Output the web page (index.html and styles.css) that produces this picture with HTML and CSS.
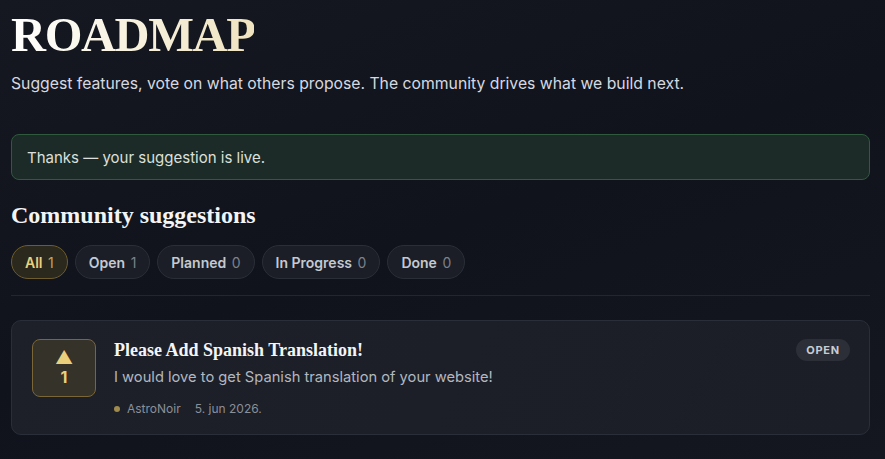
FILE: index.html
```html
<!DOCTYPE html>
<html lang="en">
<head>
    <meta charset="UTF-8">
    <meta name="viewport" content="width=device-width, initial-scale=1.0">
    <title>Roadmap</title>
    <link rel="stylesheet" href="styles.css">
</head>
<body>
    <div class="page">
        <h1 class="title">ROADMAP</h1>
        <p class="lead">Suggest features, vote on what others propose. The community drives what we build next.</p>

        <div class="alert">Thanks — your suggestion is live.</div>

        <h2 class="section-title">Community suggestions</h2>

        <div class="filters">
            <button class="pill active">All <span class="count">1</span></button>
            <button class="pill">Open <span class="count">1</span></button>
            <button class="pill">Planned <span class="count">0</span></button>
            <button class="pill">In Progress <span class="count">0</span></button>
            <button class="pill">Done <span class="count">0</span></button>
        </div>

        <div class="divider"></div>

        <div class="card">
            <div class="vote">
                <span class="arrow">▲</span>
                <span class="votes">1</span>
            </div>
            <div class="card-body">
                <h3 class="card-title">Please Add Spanish Translation!</h3>
                <p class="card-text">I would love to get Spanish translation of your website!</p>
                <div class="meta">
                    <span class="dot"></span>
                    <span>AstroNoir</span>
                    <span class="date">5. jun 2026.</span>
                </div>
            </div>
            <span class="badge">OPEN</span>
        </div>
    </div>
</body>
</html>
```
FILE: styles.css
```css
html, body {
    height: 100%;
}

body {
    margin: 0;
    background: linear-gradient(160deg, #151820 0%, #10131b 50%, #141720 100%);
    color: #d4d7de;
    font-family: Inter, "Noto Sans", sans-serif;
}

.page {
    padding: 6px 15px 0 11px;
}

.title {
    margin: 0;
    font-family: "Liberation Serif", serif;
    font-size: 48.5px;
    font-weight: bold;
    letter-spacing: -1.4px;
    line-height: 58px;
    background: linear-gradient(90deg, #ffffff 0%, #f7f1df 50%, #efe3c0 100%);
    -webkit-background-clip: text;
    background-clip: text;
    color: transparent;
    display: inline-block;
}

.lead {
    margin: 10px 0 0;
    font-size: 15.75px;
    line-height: 20px;
    color: #d6d9e0;
}

.alert {
    margin-top: 40px;
    height: 44px;
    display: flex;
    align-items: center;
    padding: 0 15px;
    border: 1px solid #2f5a3d;
    border-radius: 8px;
    background: #1c2a28;
    color: #dbe0dc;
    font-size: 15px;
}

.section-title {
    margin: 21px 0 0;
    font-family: "Liberation Serif", serif;
    font-size: 24px;
    font-weight: bold;
    line-height: 28px;
    color: #f3f4f6;
}

.filters {
    display: flex;
    gap: 7px;
    margin-top: 16px;
}

.pill {
    margin: 0;
    height: 34px;
    padding: 0 13px;
    border-radius: 17px;
    border: 1px solid #2a2e37;
    background: #1b1e26;
    color: #c5c9d1;
    font-family: Inter, "Noto Sans", sans-serif;
    font-size: 14px;
    font-weight: 600;
}

.pill .count {
    margin-left: 2px;
    font-weight: 400;
    color: #7c818b;
}

.pill.active {
    border-color: #6d5c2e;
    background: #2b281d;
    color: #ead07c;
}

.pill.active .count {
    color: #bfa660;
}

.divider {
    margin-top: 16px;
    height: 1px;
    background: #222630;
}

.card {
    margin-top: 24px;
    display: flex;
    align-items: flex-start;
    padding: 18px 19px 18px 20px;
    border: 1px solid #2a2e38;
    border-radius: 10px;
    background: linear-gradient(120deg, #1d2029 0%, #1b1e27 100%);
}

.vote {
    width: 62px;
    height: 56px;
    flex-shrink: 0;
    display: flex;
    flex-direction: column;
    align-items: center;
    justify-content: center;
    border: 1px solid #7a6636;
    border-radius: 8px;
    background: #35322a;
    color: #ead07c;
}

.arrow {
    font-size: 18px;
    line-height: 18px;
}

.votes {
    font-size: 16px;
    font-weight: 700;
    line-height: 20px;
}

.card-body {
    flex: 1;
    margin-left: 18px;
}

.card-title {
    margin: 0;
    font-family: "Liberation Serif", serif;
    font-size: 18px;
    font-weight: bold;
    line-height: 22px;
    color: #f4f5f7;
}

.card-text {
    margin: 6px 0 0;
    font-size: 14.7px;
    line-height: 20px;
    color: #b3b7bf;
}

.meta {
    margin-top: 14px;
    display: flex;
    align-items: center;
    font-size: 12px;
    color: #8b8f98;
}

.dot {
    width: 6px;
    height: 6px;
    border-radius: 50%;
    background: #a08a4c;
    margin-right: 7px;
}

.date {
    margin-left: 14px;
}

.badge {
    padding: 0 10px;
    height: 22px;
    line-height: 22px;
    border-radius: 11px;
    background: #2c2f38;
    color: #c9ccd3;
    font-size: 11px;
    font-weight: 700;
    letter-spacing: 0.8px;
}
```
